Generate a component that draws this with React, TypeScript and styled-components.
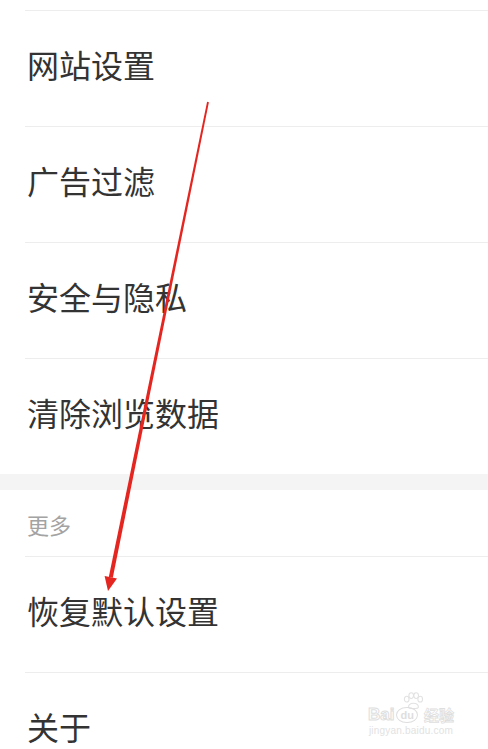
import styled, { createGlobalStyle } from "styled-components";

const GlobalStyle = createGlobalStyle`
  html, body {
    margin: 0;
    padding: 0;
    background: #ffffff;
    font-family: "Noto Sans CJK SC", "Noto Sans", sans-serif;
  }
`;

const groups = [
  { title: "", items: ["网站设置", "广告过滤", "安全与隐私", "清除浏览数据"] },
  { title: "更多", items: ["恢复默认设置", "关于"] },
];

function App() {
  return (
    <Page>
      <GlobalStyle />
      <TopCut />
      {groups.map((group, gi) => (
        <Section key={gi}>
          {gi > 0 && <Gap />}
          {group.title && <SectionTitle>{group.title}</SectionTitle>}
          {group.items.map((item) => (
            <Row key={item}>
              <RowLabel>{item}</RowLabel>
            </Row>
          ))}
        </Section>
      ))}

      <Arrow viewBox="0 0 488 749" width="488" height="749">
        <polygon
          points="207.1,101.8 208.9,102.2 112.8,577.7 108.8,576.9"
          fill="#e42520"
        />
        <polygon points="104.6,576 117,578.6 108,591" fill="#e42520" />
      </Arrow>

      <Watermark>
        <Paw viewBox="0 0 24 20" width="22" height="18">
          <ellipse cx="5" cy="8" rx="2.6" ry="3.2" />
          <ellipse cx="10" cy="4" rx="2.6" ry="3.2" />
          <ellipse cx="15.5" cy="4" rx="2.6" ry="3.2" />
          <ellipse cx="20" cy="8" rx="2.6" ry="3.2" />
          <path d="M7 17 C7 11, 18 11, 18 17 C18 19, 7 19, 7 17 Z" />
        </Paw>
        <BrandLine>
          <BrandText>Bai</BrandText>
          <DuBadge>du</DuBadge>
          <BrandCn>经验</BrandCn>
        </BrandLine>
        <BrandUrl>jingyan.baidu.com</BrandUrl>
      </Watermark>
    </Page>
  );
}

const Page = styled.div`
  position: relative;
  width: 488px;
  height: 749px;
  overflow: hidden;
  background: #ffffff;
`;

const TopCut = styled.div`
  height: 10px;
`;

const Section = styled.div`
  display: flex;
  flex-direction: column;
`;

const Gap = styled.div`
  height: 16px;
  background: #f4f4f4;
`;

const SectionTitle = styled.div`
  height: 66px;
  display: flex;
  align-items: center;
  padding-left: 27px;
  padding-top: 2px;
  box-sizing: border-box;
  font-size: 22px;
  color: #a3a3a3;
`;

const Row = styled.div`
  height: 116px;
  margin-left: 25px;
  border-top: 1.5px solid #ededed;
  display: flex;
  align-items: center;
  box-sizing: border-box;
`;

const RowLabel = styled.span`
  padding-left: 2px;
  padding-bottom: 10px;
  font-size: 32px;
  line-height: 40px;
  color: #333333;
`;

const Arrow = styled.svg`
  position: absolute;
  left: 0;
  top: 0;
  pointer-events: none;
`;

const Watermark = styled.div`
  position: absolute;
  left: 368px;
  top: 692px;
  display: flex;
  flex-direction: column;
  align-items: center;
  color: #e4e4e4;
  font-family: "Liberation Sans", Arial, sans-serif;
`;

const Paw = styled.svg`
  fill: none;
  stroke: #e2e2e2;
  stroke-width: 1.2;
  margin-bottom: -6px;
  margin-left: 4px;
`;

const BrandLine = styled.div`
  display: flex;
  align-items: center;
  gap: 2px;
`;

const BrandText = styled.span`
  font-size: 17px;
  font-weight: 700;
  color: #ffffff;
  -webkit-text-stroke: 1px #dedede;
`;

const DuBadge = styled.span`
  font-size: 11px;
  font-weight: 700;
  border: 1px solid #dedede;
  border-radius: 50%;
  padding: 1px 3px;
  color: #dedede;
`;

const BrandCn = styled.span`
  font-family: "Noto Sans CJK SC", sans-serif;
  font-size: 15px;
  font-weight: 700;
  color: #ffffff;
  -webkit-text-stroke: 0.8px #dedede;
  margin-left: 4px;
`;

const BrandUrl = styled.span`
  font-size: 10px;
  color: #e2e2e2;
  letter-spacing: 0.2px;
`;

export default App;
